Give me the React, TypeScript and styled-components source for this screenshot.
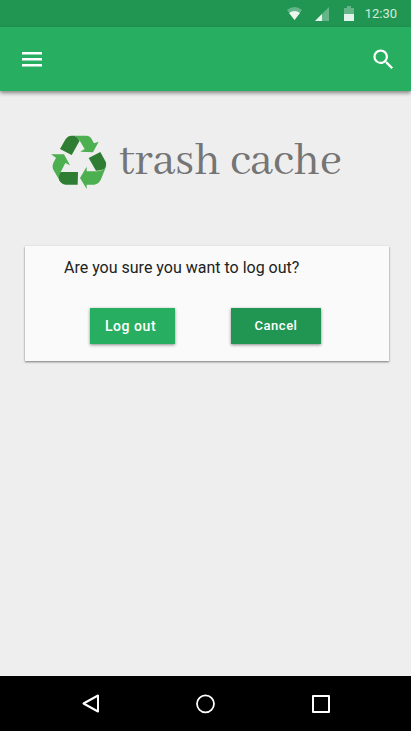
import React from "react";
import styled, { createGlobalStyle } from "styled-components";

const GlobalStyle = createGlobalStyle`
  * { box-sizing: border-box; }
  body { margin: 0; background: #eeeeee; font-family: Roboto, "Noto Sans", sans-serif; }
`;

const Screen = styled.div`
  min-height: 100vh;
  display: flex;
  flex-direction: column;
  background: #eeeeee;
`;

const StatusBar = styled.div`
  height: 27px;
  display: flex;
  align-items: center;
  justify-content: flex-end;
  padding-right: 14px;
  background: #219653;
  color: #d3eadd;
  font-size: 13px;
  line-height: 16px;
`;

const StatusIcons = styled.svg`
  width: 70px;
  height: 16px;
  margin-right: 8px;
`;

const AppBar = styled.header`
  height: 64px;
  display: flex;
  align-items: center;
  justify-content: space-between;
  padding: 0 14px 0 20px;
  background: #27ae60;
  box-shadow: 0 2px 4px rgba(0, 0, 0, 0.45);
`;

const IconButton = styled.button`
  display: flex;
  padding: 0;
  border: 0;
  background: none;
  color: #ffffff;
  cursor: pointer;
`;

const Main = styled.main`
  flex: 1;
  padding: 43px 22px 24px 25px;
`;

const Brand = styled.div`
  display: flex;
  align-items: center;
  gap: 12px;
  height: 56px;
  padding-left: 25px;
`;

const BrandName = styled.h1`
  margin: 0;
  color: #757575;
  font: 400 48px/56px "Abhaya Libre", "Liberation Serif", serif;
  white-space: nowrap;
`;

const Card = styled.section`
  margin-top: 56px;
  padding: 11px 39px 17px;
  background: #fafafa;
  box-shadow: 0 1px 2px rgba(0, 0, 0, 0.5);
`;

const Question = styled.p`
  margin: 0;
  color: #212121;
  font-size: 16px;
  line-height: 22px;
`;

const Actions = styled.div`
  display: flex;
  gap: 56px;
  margin-top: 29px;
  padding-left: 26px;
`;

const ActionButton = styled.button<{ $secondary?: boolean }>`
  width: ${(p) => (p.$secondary ? 90 : 85)}px;
  height: 36px;
  padding: ${(p) => (p.$secondary ? "0 0 1px" : "0 4px 0 0")};
  border: 0;
  color: #ffffff;
  background: ${(p) => (p.$secondary ? "#219653" : "#27ae60")};
  box-shadow: 0 1px 3px rgba(0, 0, 0, 0.45);
  font-family: inherit;
  font-size: ${(p) => (p.$secondary ? 13 : 14)}px;
  font-weight: 500;
  letter-spacing: 0.04em;
  cursor: pointer;
`;

const NavBar = styled.nav`
  height: 55px;
  display: flex;
  align-items: center;
  justify-content: center;
  gap: 91px;
  background: #000000;
`;

function Logo() {
  return (
    <svg width="57" height="54" viewBox="15 15 171 162" aria-hidden="true">
      <g fill="#4caf50">
        <path d="M88 17H126Q134 18 138 24L147 40L161 35L144 67L106 65L119 57L103 30Q97 20 88 17Z" />
        <path d="M18 73H57L75 106L61 99L47 126L60 150V163Q47 160 43 150L24 118Q20 109 25 99L33 83Z" />
        <path d="M105 144L125 110V124H158Q175 123 184 108L168 148Q162 162 148 164H125V177Z" />
      </g>
      <g fill="#2e7d32">
        <path d="M45 57L62 27Q69 17 80 17H88Q97 20 104 32L80 75Z" />
        <path d="M131 84L166 66L182 95Q186 106 179 115Q172 122 153 122Z" />
        <path d="M48 126H99L98 164H62Q49 163 43 151Q38 140 48 126Z" />
      </g>
    </svg>
  );
}

export default function App() {
  return (
    <>
      <GlobalStyle />
      <Screen>
        <StatusBar>
          <StatusIcons viewBox="0 0 70 16" aria-hidden="true">
            <g fill="#ffffff" fillOpacity="0.3">
              <path d="M0 4Q7.500 -2 15 4L7.500 14Z" />
              <path d="M42 1V15H28Z" />
              <path d="M57 2H60V0H64V2H67V8H57Z" />
            </g>
            <g fill="#ffffff" fillOpacity="0.87">
              <path d="M2 7Q7.500 3 13 7L7.500 14Z" />
              <path d="M35 8V15H28Z" />
              <path d="M57 8H67V15H57Z" />
            </g>
          </StatusIcons>
          <span>12:30</span>
        </StatusBar>
        <AppBar>
          <IconButton aria-label="Menu">
            <svg width="24" height="24" viewBox="0 0 24 24" fill="currentColor">
              <path d="M2 5h20v2.500H2zM2 11h20v2.500H2zM2 17h20v2.500H2z" />
            </svg>
          </IconButton>
          <IconButton aria-label="Search">
            <svg width="27" height="27" viewBox="0 0 24 24" fill="currentColor">
              <path d="M15.500 14h-.79l-.28-.27A6.470 6.470 0 0 0 16 9.500 6.500 6.500 0 1 0 9.500 16c1.610 0 3.090-.59 4.230-1.570l.27.28v.79l5 4.990L20.490 19l-4.990-5zm-6 0C7.010 14 5 11.990 5 9.500S7.010 5 9.500 5 14 7.010 14 9.500 11.990 14 9.500 14z" />
            </svg>
          </IconButton>
        </AppBar>
        <Main>
          <Brand>
            <Logo />
            <BrandName>trash cache</BrandName>
          </Brand>
          <Card>
            <Question>Are you sure you want to log out?</Question>
            <Actions>
              <ActionButton>Log out</ActionButton>
              <ActionButton $secondary>Cancel</ActionButton>
            </Actions>
          </Card>
        </Main>
        <NavBar>
          <IconButton aria-label="Back">
            <svg width="24" height="24" viewBox="0 0 24 24" fill="none" stroke="currentColor" strokeWidth="2" strokeLinejoin="round">
              <path d="M19 3.500V19.500L4.500 11.500Z" />
            </svg>
          </IconButton>
          <IconButton aria-label="Home">
            <svg width="24" height="24" viewBox="0 0 24 24" fill="none" stroke="currentColor" strokeWidth="1.800">
              <circle cx="11.500" cy="11.800" r="8.500" />
            </svg>
          </IconButton>
          <IconButton aria-label="Recent apps">
            <svg width="24" height="24" viewBox="0 0 24 24" fill="none" stroke="currentColor" strokeWidth="2" strokeLinejoin="round">
              <path d="M4 4H20V20H4Z" />
            </svg>
          </IconButton>
        </NavBar>
      </Screen>
    </>
  );
}
